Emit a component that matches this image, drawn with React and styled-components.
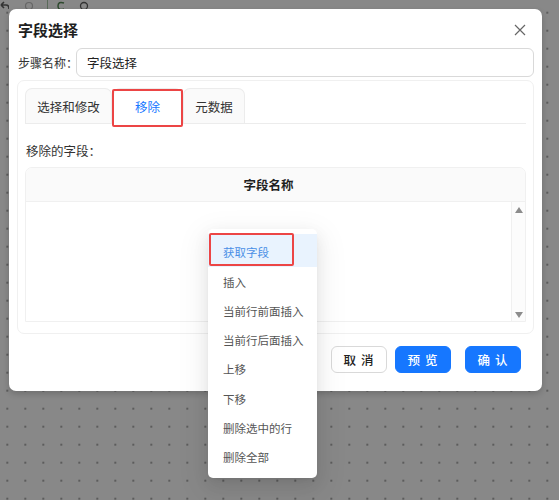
import React from "react";
import styled, { createGlobalStyle } from "styled-components";

const Global = createGlobalStyle`
  html, body { margin: 0; padding: 0; }
  body { font-family: "Noto Sans CJK SC", "Noto Sans", sans-serif; }
  * { box-sizing: border-box; }
`;

const Page = styled.div`
  position: relative;
  width: 559px;
  height: 500px;
  overflow: hidden;
  background-color: #888888;
  background-image: radial-gradient(circle, #5c5c5c 0.9px, transparent 1.3px);
  background-size: 18px 18px;
  background-position: -1.7px 3.7px;
  display: flex;
  flex-direction: column;
  padding-left: 9px;
`;

const Toolbar = styled.div`
  height: 9px;
  display: flex;
  align-items: flex-end;
  gap: 6px;
  margin-left: -9px;
  overflow: visible;
`;

const ToolIcon = styled.svg`
  width: ${(p) => p.$w || 10}px;
  height: 12px;
  margin-bottom: -3px;
  margin-left: ${(p) => p.$ml || 0}px;
  flex: none;
`;

const Dialog = styled.div`
  position: relative;
  z-index: 1;
  width: 533px;
  height: 382px;
  background: #ffffff;
  border-radius: 7px;
  box-shadow: 0 3px 6px rgba(0, 0, 0, 0.18);
  display: flex;
  flex-direction: column;
`;

const Header = styled.div`
  height: 39px;
  padding: 0 16px 0 9px;
  display: flex;
  align-items: center;
  justify-content: space-between;
`;

const Title = styled.div`
  font-size: 15px;
  font-weight: 700;
  color: #1f1f1f;
  margin-top: 1px;
`;

const CloseIcon = styled.svg`
  width: 12px;
  height: 12px;
  margin-top: 2px;
`;

const FieldRow = styled.div`
  display: flex;
  align-items: center;
  padding: 0 8px 0 9px;
  height: 29px;
`;

const FieldLabel = styled.label`
  font-size: 12px;
  color: #333;
  width: 58px;
  flex: none;
  white-space: nowrap;
`;

const TextInput = styled.input`
  flex: 1;
  height: 29px;
  border: 1px solid #d9d9d9;
  border-radius: 6px;
  padding: 0 10px;
  font-family: "Noto Sans CJK SC", sans-serif;
  font-size: 12.5px;
  color: #222;
  outline: none;
  background: #fff;
`;

const Card = styled.div`
  margin: 3px 8px 0 8px;
  height: 254px;
  border: 1px solid #f0f0f0;
  border-radius: 7px;
  padding: 7px 7px 11px 7px;
  display: flex;
  flex-direction: column;
`;

const TabBar = styled.div`
  display: flex;
  height: 36px;
  border-bottom: 1px solid #ececec;
`;

const Tab = styled.div`
  width: ${(p) => p.$w}px;
  height: ${(p) => (p.$active ? 36 : 35)}px;
  margin-bottom: ${(p) => (p.$active ? "-1px" : "0")};
  padding: 0;
  display: flex;
  align-items: center;
  justify-content: center;
  flex: none;
  white-space: nowrap;
  font-size: 12.5px;
  color: ${(p) => (p.$active ? "#1677ff" : "#333")};
  background: ${(p) => (p.$active ? "#fff" : "#fafafa")};
  border: 1px solid #ececec;
  border-bottom: ${(p) => (p.$active ? "1px solid #fff" : "none")};
  border-radius: 7px 7px 0 0;
  margin-right: 1px;
`;

const SectionLabel = styled.div`
  font-size: 12.5px;
  color: #333;
  margin: 18px 0 0 1px;
  height: 18px;
  line-height: 18px;
`;

const Table = styled.div`
  margin-top: 7px;
  flex: 1;
  border: 1px solid #f0f0f0;
  border-radius: 7px 7px 0 0;
  display: flex;
  flex-direction: column;
  overflow: hidden;
`;

const TableHead = styled.div`
  height: 34px;
  background: #fafafa;
  border-bottom: 1px solid #f0f0f0;
  display: flex;
  align-items: center;
  justify-content: center;
  padding-right: 14px;
  font-size: 12.5px;
  font-weight: 700;
  color: #1f1f1f;
`;

const TableBody = styled.div`
  flex: 1;
  display: flex;
`;

const BodyArea = styled.div`
  flex: 1;
  border-right: 1px solid #f0f0f0;
`;

const ScrollCol = styled.div`
  width: 13px;
  background: #fcfcfc;
  display: flex;
  flex-direction: column;
  justify-content: space-between;
  align-items: center;
  padding: 5px 0 3px;
`;

const Arrow = styled.div`
  width: 0;
  height: 0;
  border-left: 4.5px solid transparent;
  border-right: 4.5px solid transparent;
  ${(p) =>
    p.$down
      ? "border-top: 6px solid #8c8c8c;"
      : "border-bottom: 6px solid #8c8c8c;"}
`;

const Footer = styled.div`
  display: flex;
  justify-content: flex-end;
  padding: 12px 21px 0 0;
  gap: 8px;
`;

const Button = styled.button`
  width: 56px;
  height: 27px;
  border-radius: 6px;
  font-family: "Noto Sans CJK SC", sans-serif;
  font-size: 12.5px;
  font-weight: 500;
  letter-spacing: 1px;
  border: 1px solid ${(p) => (p.$primary ? "#1677ff" : "#d9d9d9")};
  background: ${(p) => (p.$primary ? "#1677ff" : "#fff")};
  color: ${(p) => (p.$primary ? "#fff" : "#222")};
  margin-left: ${(p) => p.$ml || 0}px;
  padding: 0;
  display: flex;
  align-items: center;
  justify-content: center;
`;

const Menu = styled.div`
  position: absolute;
  left: 208px;
  top: 229px;
  width: 109px;
  height: 249px;
  z-index: 3;
  background: #fff;
  border-radius: 5px;
  box-shadow: 0 3px 6px -4px rgba(0, 0, 0, 0.12), 0 6px 16px 0 rgba(0, 0, 0, 0.08),
    0 9px 28px 8px rgba(0, 0, 0, 0.05);
  padding: 5px 0 6px;
  display: flex;
  flex-direction: column;
`;

const MenuItem = styled.div`
  height: 29.3px;
  display: flex;
  align-items: center;
  padding-left: 15px;
  font-size: 11.5px;
  color: ${(p) => (p.$hl ? "#4a8fe6" : "#555")};
  background: ${(p) => (p.$hl ? "#e9f3fe" : "transparent")};
  white-space: nowrap;
  ${(p) => (p.$hl ? "height: 33px; padding-top: 4px;" : "")}
`;

const Mark = styled.div`
  position: absolute;
  z-index: 4;
  left: ${(p) => p.$x}px;
  top: ${(p) => p.$y}px;
  width: ${(p) => p.$w}px;
  height: ${(p) => p.$h}px;
  border: 2.5px solid #ec4545;
  border-radius: 2px;
  pointer-events: none;
`;

const menuItems = [
  "获取字段",
  "插入",
  "当前行前面插入",
  "当前行后面插入",
  "上移",
  "下移",
  "删除选中的行",
  "删除全部",
];

export default function App() {
  return (
    <Page>
      <Global />
      <Toolbar>
        <ToolIcon $w={9} viewBox="0 0 9 12">
          <path d="M1 5 L4 2 M1 5 L4 8 M1 5 H6 Q9 5 9 9" stroke="#333" strokeWidth="1.6" fill="none" />
        </ToolIcon>
        <ToolIcon $w={10} $ml={9} viewBox="0 0 10 12">
          <circle cx="5" cy="6" r="3.5" stroke="#666" strokeWidth="1.2" fill="none" />
        </ToolIcon>
        <ToolIcon $w={3} $ml={6} viewBox="0 0 3 12">
          <line x1="1.5" y1="0" x2="1.5" y2="12" stroke="#5a6a5a" strokeWidth="1" />
        </ToolIcon>
        <ToolIcon $w={8} $ml={2} viewBox="0 0 8 12">
          <path d="M7 3 Q1 1 1 6 Q1 11 7 9" stroke="#2f4a2f" strokeWidth="1.5" fill="none" />
        </ToolIcon>
        <ToolIcon $w={10} $ml={8} viewBox="0 0 10 12">
          <circle cx="5" cy="6" r="3.5" stroke="#333" strokeWidth="1.3" fill="none" />
        </ToolIcon>
      </Toolbar>
      <Dialog>
        <Header>
          <Title>字段选择</Title>
          <CloseIcon viewBox="0 0 12 12">
            <path d="M1 1 L11 11 M11 1 L1 11" stroke="#666" strokeWidth="1.2" />
          </CloseIcon>
        </Header>
        <FieldRow>
          <FieldLabel>步骤名称：</FieldLabel>
          <TextInput defaultValue="字段选择" readOnly />
        </FieldRow>
        <Card>
          <TabBar>
            <Tab $w={87}>选择和修改</Tab>
            <Tab $w={69} $active>移除</Tab>
            <Tab $w={62}>元数据</Tab>
          </TabBar>
          <SectionLabel>移除的字段：</SectionLabel>
          <Table>
            <TableHead>字段名称</TableHead>
            <TableBody>
              <BodyArea />
              <ScrollCol>
                <Arrow />
                <Arrow $down />
              </ScrollCol>
            </TableBody>
          </Table>
        </Card>
        <Footer>
          <Button>取 消</Button>
          <Button $primary>预 览</Button>
          <Button $primary $ml={6}>确 认</Button>
        </Footer>
      </Dialog>
      <Menu>
        {menuItems.map((t, i) => (
          <MenuItem key={t} $hl={i === 0}>
            {t}
          </MenuItem>
        ))}
      </Menu>
      <Mark $x={112} $y={89} $w={71} $h={38} />
      <Mark $x={209} $y={233} $w={85} $h={33} />
    </Page>
  );
}
